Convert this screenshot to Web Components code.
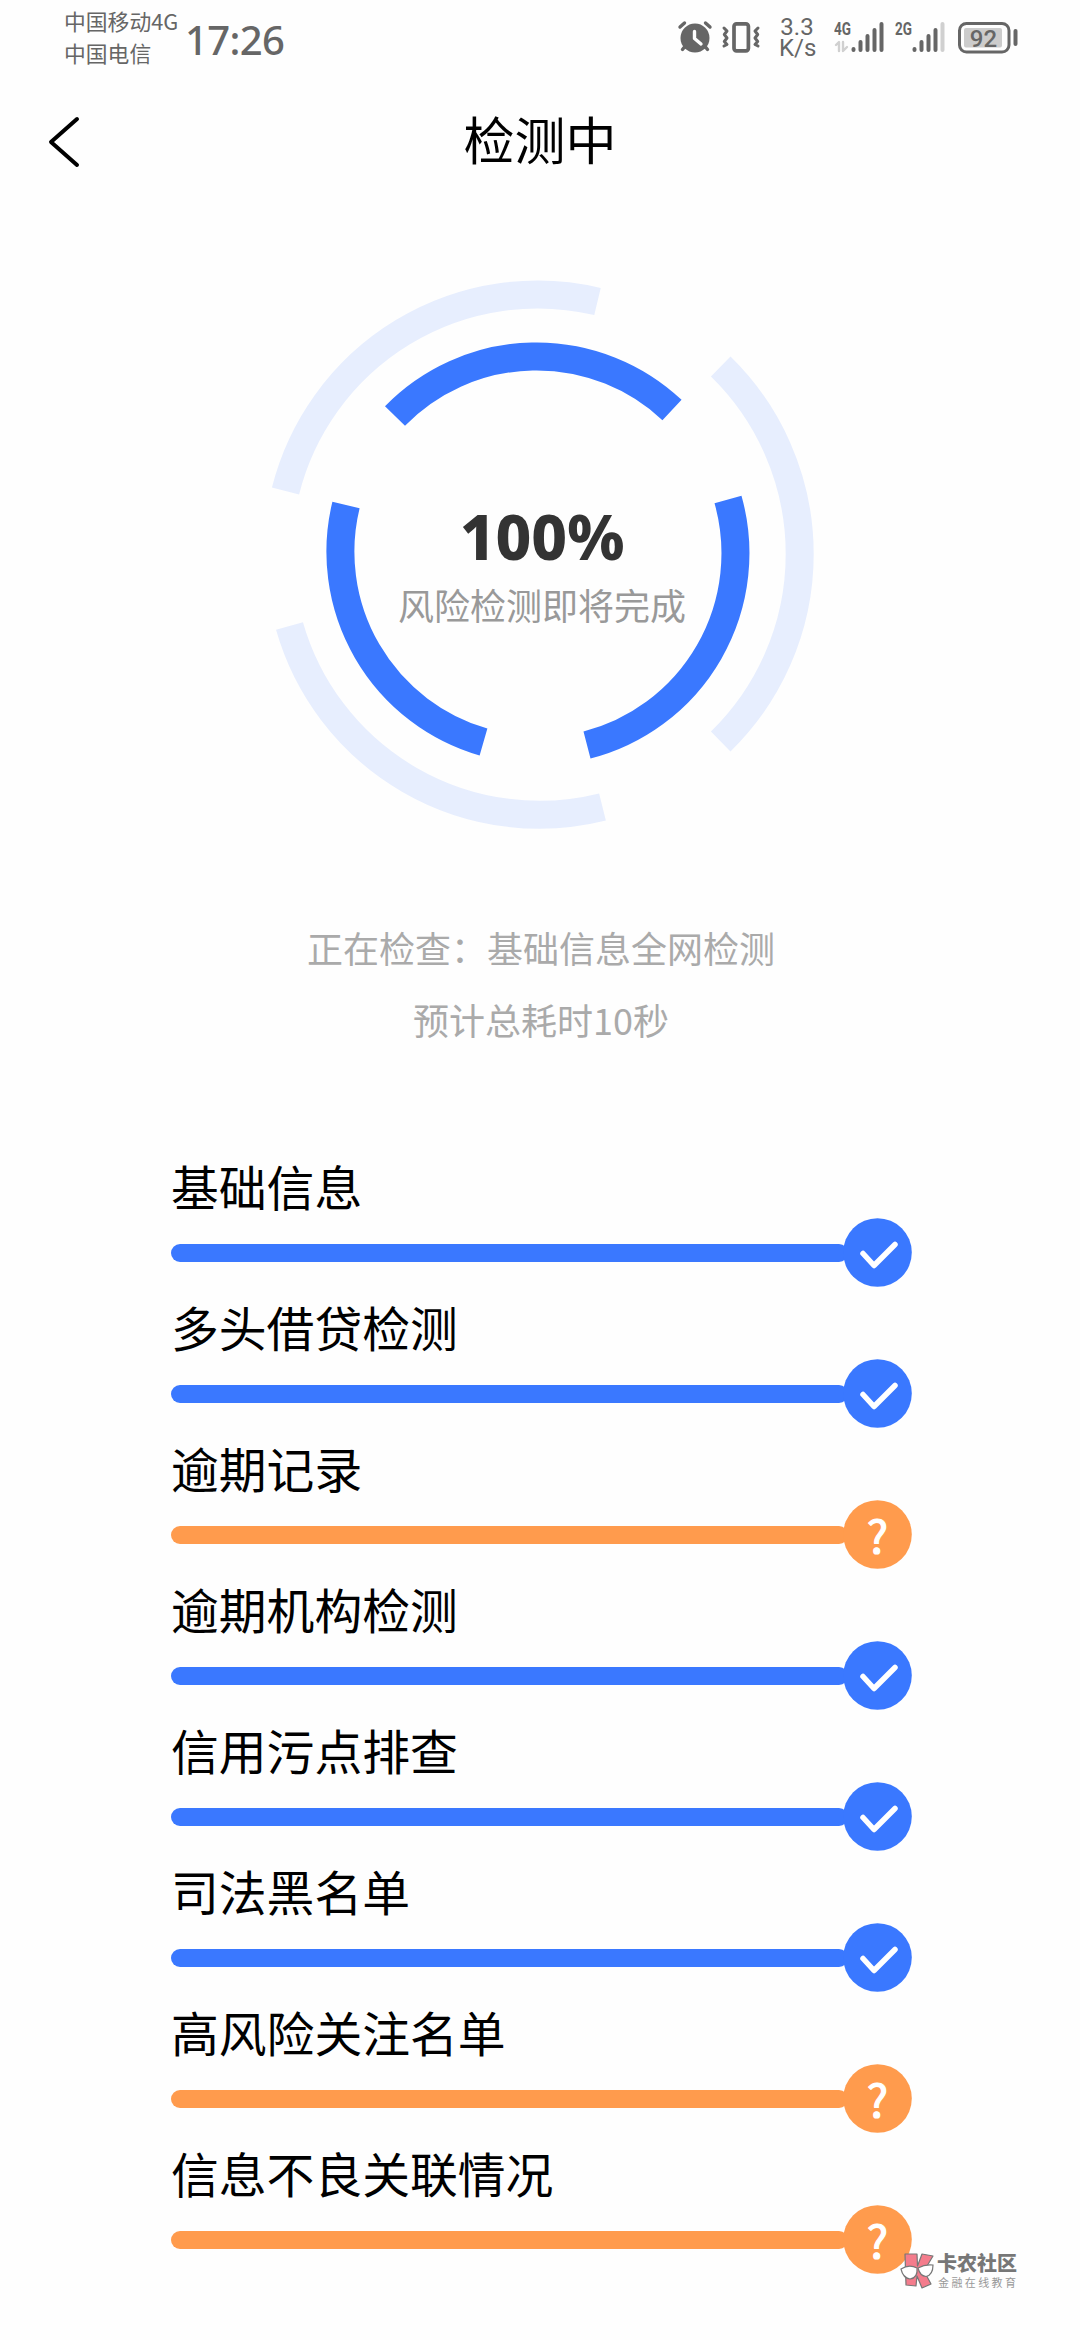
<!DOCTYPE html>
<html lang="zh-CN">
<head>
<meta charset="utf-8">
<title>检测中</title>
<style>
    body {
        margin: 0;
        width: 1080px;
        height: 2340px;
        position: relative;
        overflow: hidden;
        background: #fefefe;
        color: #000;
        font-family: "Noto Sans CJK SC", "Noto Sans", sans-serif;
    }
</style>
</head>
<body>
<status-bar time="17:26" battery="92">
    <span slot="carrier">中国移动4G</span>
    <span slot="carrier">中国电信</span>
</status-bar>
<nav-header>检测中</nav-header>
<progress-ring value="100%">风险检测即将完成</progress-ring>
<scan-status>
    <span>正在检查：基础信息全网检测</span>
    <span>预计总耗时10秒</span>
</scan-status>
<check-list>
    <check-item>基础信息</check-item>
    <check-item>多头借贷检测</check-item>
    <check-item state="warn">逾期记录</check-item>
    <check-item>逾期机构检测</check-item>
    <check-item>信用污点排查</check-item>
    <check-item>司法黑名单</check-item>
    <check-item state="warn">高风险关注名单</check-item>
    <check-item state="warn">信息不良关联情况</check-item>
</check-list>
<water-mark name="卡农社区">金融在线教育</water-mark>

<script>
class StatusBar extends HTMLElement {

    constructor() {
        super();
        this.attachShadow({ mode: "open" });
    }

    connectedCallback() {
        const time = this.getAttribute("time");
        const battery = this.getAttribute("battery");

        const styles = `
            :host {
                display: flex;
                justify-content: space-between;
                height: 80px;
                box-sizing: border-box;
                padding: 0 61px 0 64px;
                color: #666;
            }
            .left, .right {
                display: flex;
                align-items: flex-start;
            }
            .carrier {
                display: flex;
                flex-direction: column;
                width: 121px;
                padding-top: 5px;
                font-size: 21.8px;
                line-height: 32px;
                white-space: nowrap;
            }
            .time {
                padding-top: 10px;
                font: 500 40px/60px "Noto Sans", sans-serif;
                letter-spacing: -0.6px;
            }
            .speed {
                width: 36px;
                margin: 17px 19px 0 18px;
                font: 24px/21px Roboto, sans-serif;
                text-align: center;
            }
            svg {
                display: block;
                margin-top: 18px;
                fill: none;
                stroke: #666;
                stroke-linecap: round;
                stroke-linejoin: round;
            }
            text {
                fill: #666;
                stroke: none;
                font-family: Roboto, sans-serif;
            }
            .vibrate { margin-left: 8px; }
            .second { margin-left: 11px; }
            .battery { margin-left: 12px; }
        `;

        this.shadowRoot.innerHTML = `
            <style>${styles}</style>
            <div class="left">
                <div class="carrier"><slot name="carrier"></slot></div>
                <div class="time">${time}</div>
            </div>
            <div class="right">
                <svg width="36" height="38" viewBox="0 0 36 38">
                    <circle cx="18" cy="20" r="14.500" fill="#666" stroke="none"/>
                    <path d="M3 9L7.500 5M28.500 5L33 9" stroke-width="3.400"/>
                    <path d="M7.500 29L5.500 31.500M28.500 29L30.500 31.500" stroke-width="3.400"/>
                    <path d="M17.500 13.500V20.500L24 26" stroke="#fefefe" stroke-width="3.400"/>
                </svg>
                <svg class="vibrate" width="40" height="38" viewBox="0 0 40 38">
                    <rect x="13" y="5.800" width="14.400" height="27" rx="2.500" stroke-width="3.700"/>
                    <path d="M3 10L6 13L3.300 16.500L6 20L3.300 23.500L6 26.500L3 28" stroke-width="3"/>
                    <path d="M37 10L34 13L36.700 16.500L34 20L36.700 23.500L34 26.500L37 28" stroke-width="3"/>
                </svg>
                <div class="speed">3.3 K/s</div>
                <svg width="50" height="38" viewBox="0 0 50 38">
                    <text x="0" y="17" font-size="18" font-weight="700" textLength="17" lengthAdjust="spacingAndGlyphs">4G</text>
                    <path d="M2 27L5 24V33M9 24V33L13 29" stroke="#d0d0d0" stroke-width="2.400"/>
                    <path d="M19.500 31V32M26.500 24V32M33.500 18V32M40.500 12V32M47.500 6V32" stroke-width="4"/>
                </svg>
                <svg class="second" width="50" height="38" viewBox="0 0 50 38">
                    <text x="0" y="17" font-size="18" font-weight="700" textLength="17" lengthAdjust="spacingAndGlyphs">2G</text>
                    <path d="M47.500 6V32" stroke="#d0d0d0" stroke-width="4"/>
                    <path d="M19.500 31V32M26.500 24V32M33.500 18V32M40.500 12V32" stroke-width="4"/>
                </svg>
                <svg class="battery" width="62" height="38" viewBox="0 0 62 38">
                    <rect x="2.500" y="5.500" width="49.500" height="28.500" rx="7" stroke-width="3"/>
                    <rect x="7" y="10" width="38" height="19.500" rx="2" fill="#ccc" stroke="none"/>
                    <path d="M58.500 13V26" stroke-width="4"/>
                    <text x="26.500" y="28.500" font-size="24" font-weight="500" text-anchor="middle">${battery}</text>
                </svg>
            </div>
        `;
    }
}
customElements.define("status-bar", StatusBar);

class NavHeader extends HTMLElement {

    constructor() {
        super();
        this.attachShadow({ mode: "open" });
    }

    connectedCallback() {
        this.shadowRoot.innerHTML = `
            <style>
                :host {
                    display: grid;
                    grid-template-columns: 80px 1fr 80px;
                    align-items: center;
                    height: 124px;
                }
                svg { margin-left: 47px; }
                h1 {
                    margin: 0 0 8px;
                    font-size: 51px;
                    font-weight: 400;
                    line-height: 72px;
                    text-align: center;
                }
            </style>
            <svg width="33" height="52" viewBox="0 0 33 52">
                <path d="M30 3L4 26L30 49" fill="none" stroke="#000" stroke-width="4" stroke-linecap="round" stroke-linejoin="round"/>
            </svg>
            <h1><slot></slot></h1>
        `;
    }
}
customElements.define("nav-header", NavHeader);

class ProgressRing extends HTMLElement {

    constructor() {
        super();
        this.attachShadow({ mode: "open" });
    }

    connectedCallback() {
        const value = this.getAttribute("value");

        this.shadowRoot.innerHTML = `
            <style>
                :host {
                    display: grid;
                    justify-items: center;
                    height: 707px;
                }
                svg, .text { grid-area: 1 / 1; }
                svg {
                    margin-top: 56px;
                    fill: none;
                    stroke-width: 28px;
                }
                .track { stroke: #e7eefe; }
                .bar { stroke: #3a78ff; }
                .text {
                    padding: 292px 0 0 4px;
                    text-align: center;
                }
                .value {
                    font: 800 62px/80px "Noto Sans", sans-serif;
                    color: #333;
                }
                .label {
                    font-size: 36px;
                    line-height: 56px;
                    color: #999;
                }
            </style>
            <svg width="600" height="600" viewBox="240 260 600 600">
                <path class="track" d="M285.500 491A260 260 0 0 1 597.500 301.500M720.700 366.500A262 262 0 0 1 720.700 741.500M289.500 626A260 260 0 0 0 602.500 807"/>
                <path class="bar" d="M395 416A198 198 0 0 1 672 410M346 505A198 198 0 0 0 483.500 742M728 499.500A198 198 0 0 1 587 745"/>
            </svg>
            <div class="text">
                <div class="value">${value}</div>
                <div class="label"><slot></slot></div>
            </div>
        `;
    }
}
customElements.define("progress-ring", ProgressRing);

class ScanStatus extends HTMLElement {

    constructor() {
        super();
        this.attachShadow({ mode: "open" });
    }

    connectedCallback() {
        this.shadowRoot.innerHTML = `
            <style>
                :host {
                    display: flex;
                    flex-direction: column;
                    align-items: center;
                    height: 235px;
                    padding-left: 2px;
                    font-size: 36px;
                    line-height: 72px;
                    color: #aaa;
                }
            </style>
            <slot></slot>
        `;
    }
}
customElements.define("scan-status", ScanStatus);

class CheckList extends HTMLElement {

    constructor() {
        super();
        this.attachShadow({ mode: "open" });
    }

    connectedCallback() {
        this.shadowRoot.innerHTML = `
            <style>
                :host {
                    display: flex;
                    flex-direction: column;
                    padding: 0 168px 0 171px;
                }
            </style>
            <slot></slot>
        `;
    }
}
customElements.define("check-list", CheckList);

class CheckItem extends HTMLElement {

    constructor() {
        super();
        this.attachShadow({ mode: "open" });
    }

    connectedCallback() {
        const warn = this.getAttribute("state") === "warn";
        const color = warn ? "#ff9b4d" : "#3a78ff";
        const icon = warn
            ? `<text x="34.500" y="52.500" text-anchor="middle">?</text>`
            : `<path d="M20 35.500L31 47.500L52 26.500"/>`;

        this.shadowRoot.innerHTML = `
            <style>
                :host { display: block; }
                .label {
                    height: 72px;
                    font-size: 47.800px;
                    line-height: 80px;
                    white-space: nowrap;
                }
                .line {
                    display: flex;
                    align-items: center;
                    height: 69px;
                }
                .bar {
                    flex: 1;
                    height: 18px;
                    margin-right: -5px;
                    border-radius: 9px;
                    background: ${color};
                }
                svg { display: block; }
                path {
                    fill: none;
                    stroke: #fff;
                    stroke-width: 5.500px;
                    stroke-linecap: round;
                    stroke-linejoin: round;
                }
                text {
                    fill: #fff;
                    stroke: #fff;
                    stroke-width: 1.200px;
                    stroke-linejoin: round;
                    font: 400 45px "Noto Sans CJK SC", sans-serif;
                }
            </style>
            <div class="label"><slot></slot></div>
            <div class="line">
                <div class="bar"></div>
                <svg width="69" height="69" viewBox="0 0 69 69">
                    <circle cx="34.500" cy="34.500" r="34.300" fill="${color}"/>
                    ${icon}
                </svg>
            </div>
        `;
    }
}
customElements.define("check-item", CheckItem);

class WaterMark extends HTMLElement {

    constructor() {
        super();
        this.attachShadow({ mode: "open" });
    }

    connectedCallback() {
        const name = this.getAttribute("name");

        this.shadowRoot.innerHTML = `
            <style>
                :host {
                    position: absolute;
                    left: 899px;
                    top: 2251px;
                    display: flex;
                    gap: 2px;
                    color: #777;
                    white-space: nowrap;
                }
                .name {
                    font-size: 20px;
                    font-weight: 900;
                    line-height: 24px;
                }
                .sub {
                    padding-left: 1px;
                    font-size: 11px;
                    line-height: 14px;
                    letter-spacing: 2.400px;
                    color: #999;
                }
            </style>
            <svg width="36" height="40" viewBox="0 0 36 40">
                <path d="M6 3H18L18.500 15L23 3L34 5L25 20L32 33L23 37L18 25L17 35L7 34Z" fill="#f47c8c" stroke="#777" stroke-width="1.200" stroke-linejoin="round"/>
                <g fill="#fff" stroke="#777" stroke-width="1.200">
                    <path d="M2 18Q10 13 18 17Q19 27 11 28Q4 27 2 18Z"/>
                    <path d="M19 17Q26 13 34 14Q34 24 27 25.500Q21 25 19 17Z"/>
                </g>
            </svg>
            <div>
                <div class="name">${name}</div>
                <div class="sub"><slot></slot></div>
            </div>
        `;
    }
}
customElements.define("water-mark", WaterMark);
</script>
</body>
</html>
